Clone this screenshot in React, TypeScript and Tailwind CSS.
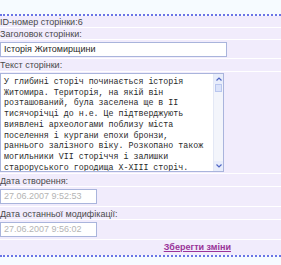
export default function App() {
  const lines = [
    'У глибині сторіч починається історія',
    'Житомира. Територія, на якій він',
    'розташований, була заселена ще в II',
    'тисячорічці до н.е. Це підтверджують',
    'виявлені археологами поблизу міста',
    'поселення і кургани епохи бронзи,',
    'раннього залізного віку. Розкопано також',
    'могильники VII сторіччя і залишки',
    'староруського городища X-XIII сторіч.',
  ];

  return (
    <div
      className="w-[281px] h-[265px] overflow-hidden bg-[#f6fbff] text-[#4a4a4a]"
      style={{ fontFamily: '"Liberation Sans", Arial, sans-serif' }}
    >
      <div className="h-[14px]" />
      {/* dotted top line */}
      <div className="h-[2px] border-t-2 border-dotted border-[#6b74e6]" />

      <div className="bg-[#f1ecfc] text-[9px] leading-[11px]">
        <div className="h-[12px] border-b border-white pt-[1px]">ID-номер сторінки:6</div>
        <div className="h-[12px] border-b border-white pt-[1px]">Заголовок сторінки:</div>
        <div className="h-[19px] border-b border-white pt-[2px]">
          <div className="w-[227px] h-[15px] bg-white border border-[#a9b4dc] px-[3px] leading-[13px] text-[#2a2a2a]">
            Історія Житомирщини
          </div>
        </div>
        <div className="h-[13px] border-b border-white pt-[1px]">Текст сторінки:</div>

        <div className="h-[102px] border-b border-white pt-[1px]">
          <div className="w-[224px] h-[99px] bg-white border border-[#a9b4dc] flex">
            <div
              className="flex-1 pl-[3px] pt-[3px] text-[8.3px] leading-[10.7px] text-[#2a2a2a] whitespace-nowrap overflow-hidden"
              style={{ fontFamily: '"Liberation Mono", "Courier New", monospace' }}
            >
              {lines.map((l) => (
                <div key={l}>{l}</div>
              ))}
            </div>
            {/* scrollbar */}
            <div className="w-[10px] flex flex-col bg-[#f3f5fb] border-l border-[#e3e8f5]">
              <div className="h-[10px] flex items-center justify-center bg-[#e8edfb]">
                <svg width="6" height="4" viewBox="0 0 6 4">
                  <path d="M0.5 3.5 L3 1 L5.5 3.5" stroke="#4f66c4" strokeWidth="1.2" fill="none" />
                </svg>
              </div>
              <div className="h-[8px] mx-[1px] bg-[#dbe3fa] border border-[#b9c6ee]" />
              <div className="flex-1" />
              <div className="h-[10px] flex items-center justify-center bg-[#e8edfb]">
                <svg width="6" height="4" viewBox="0 0 6 4">
                  <path d="M0.5 0.5 L3 3 L5.5 0.5" stroke="#4f66c4" strokeWidth="1.2" fill="none" />
                </svg>
              </div>
            </div>
          </div>
        </div>

        <div className="h-[13px] border-b border-white pt-[2px]">Дата створення:</div>
        <div className="h-[20px] border-b border-white pt-[2px]">
          <div className="w-[97px] h-[15px] bg-white border border-[#a9b4dc] px-[3px] leading-[13px] text-[#b4b4b4]">
            27.06.2007 9:52:53
          </div>
        </div>
        <div className="h-[13px] border-b border-white pt-[2px]">Дата останньої модифікації:</div>
        <div className="h-[20px] border-b border-white pt-[2px]">
          <div className="w-[97px] h-[15px] bg-white border border-[#a9b4dc] px-[3px] leading-[13px] text-[#b4b4b4]">
            27.06.2007 9:56:02
          </div>
        </div>
        <div className="h-[15px] flex justify-end items-center pr-[50px]">
          <span className="font-bold underline text-[#993399] text-[9px]">Зберегти зміни</span>
        </div>
      </div>

      {/* dotted bottom line */}
      <div className="h-[2px] border-t-2 border-dotted border-[#6b74e6]" />
    </div>
  );
}
